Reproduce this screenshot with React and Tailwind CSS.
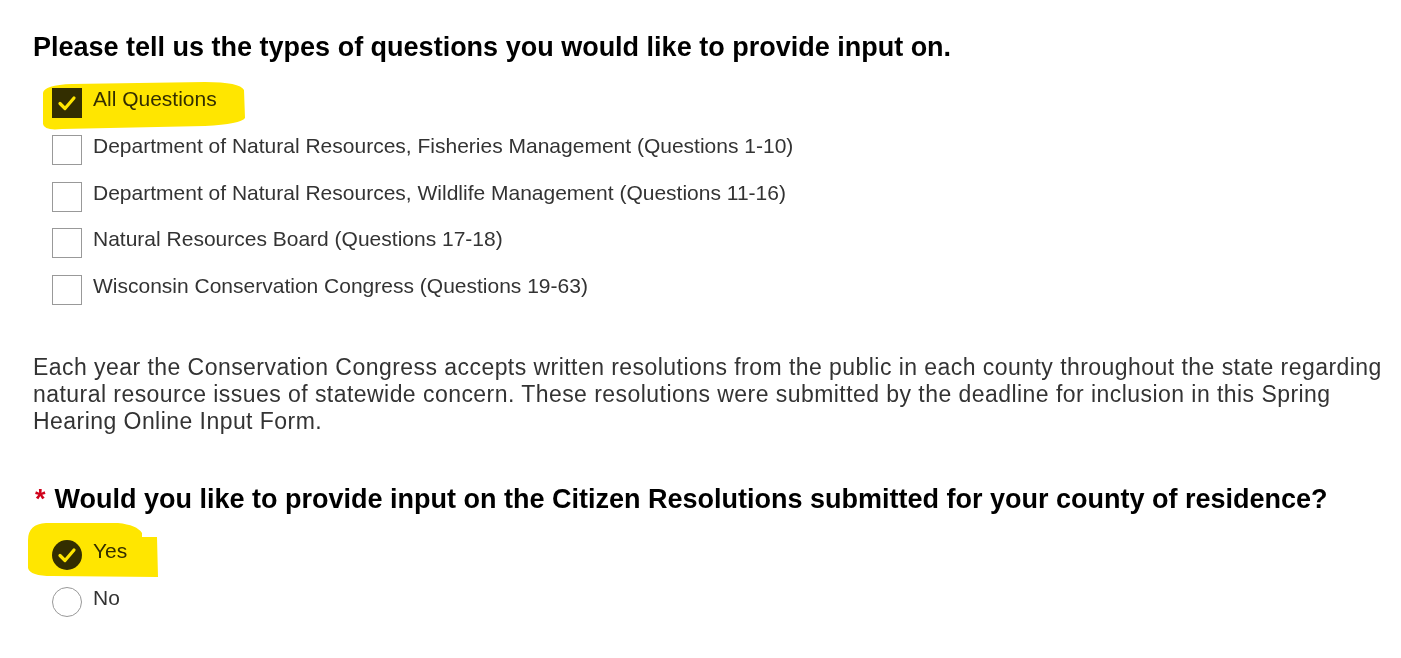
import React from "react";

const topics = [
  "All Questions",
  "Department of Natural Resources, Fisheries Management (Questions 1-10)",
  "Department of Natural Resources, Wildlife Management (Questions 11-16)",
  "Natural Resources Board (Questions 17-18)",
  "Wisconsin Conservation Congress (Questions 19-63)",
];

const Check = () => (
  <svg viewBox="0 0 30 30" className="w-[30px] h-[30px]">
    <path d="M8 15.5 L13 20.5 L22 10" fill="none" stroke="#fff" strokeWidth="3.2" strokeLinecap="round" strokeLinejoin="round" />
  </svg>
);

const Box = ({ checked }) =>
  checked ? (
    <span className="w-[30px] h-[30px] shrink-0 bg-[#333] flex items-center justify-center">
      <Check />
    </span>
  ) : (
    <span className="w-[30px] h-[30px] shrink-0 bg-white border border-[#999]" />
  );

const Radio = ({ checked }) =>
  checked ? (
    <span className="w-[30px] h-[30px] shrink-0 rounded-full bg-[#333] flex items-center justify-center">
      <Check />
    </span>
  ) : (
    <span className="w-[30px] h-[30px] shrink-0 rounded-full bg-white border border-[#999]" />
  );

const App = () => {
  return (
    <div className="relative w-[1401px] h-[658px] bg-white overflow-hidden font-['Liberation_Sans',Arial,sans-serif] text-[#333]">
      <div className="pl-[33px] pr-[10px] pt-[31px]">
        <h2 className="text-[27px] leading-[32px] font-bold text-black">
          Please tell us the types of questions you would like to provide input on.
        </h2>

        <div className="mt-[25px] pl-[19px] flex flex-col">
          {topics.map((t, i) => (
            <label key={i} className="h-[46.75px] flex items-start gap-[11px]">
              <Box checked={i === 0} />
              <span className="text-[21px] leading-[24px] -mt-[1px]">{t}</span>
            </label>
          ))}
        </div>

        <p className="mt-[32px] text-[23px] leading-[27px] tracking-[0.45px]">
          Each year the Conservation Congress accepts written resolutions from the public in each county throughout the state regarding natural resource issues of statewide concern. These resolutions were submitted by the deadline for inclusion in this Spring Hearing Online Input Form.
        </p>

        <h2 className="mt-[48px] text-[27px] leading-[32px] font-bold text-black flex gap-[9px]">
          <span className="text-[#d0021b] ml-[2px]">*</span>
          <span>Would you like to provide input on the Citizen Resolutions submitted for your county of residence?</span>
        </h2>

        <div className="mt-[25px] pl-[19px] flex flex-col">
          {["Yes", "No"].map((t, i) => (
            <label key={t} className="h-[47px] flex items-start gap-[11px]">
              <Radio checked={i === 0} />
              <span className="text-[21px] leading-[24px] -mt-[1px]">{t}</span>
            </label>
          ))}
        </div>
      </div>

      {/* marker highlights drawn over the answers */}
      <svg className="absolute inset-0 w-full h-full pointer-events-none mix-blend-multiply" viewBox="0 0 1401 658">
        <path d="M43,93 Q44,85 72,84 L205,82 Q240,82 244,90 L245,118 Q241,124 205,126 L62,129 Q44,131 43,124 Z" fill="#ffe600" />
        <path d="M28,540 Q28,524 46,523 L118,523 Q137,525 142,533 L142,537 L157,537 L158,577 L52,576 Q30,576 28,568 Z" fill="#ffe600" />
      </svg>
    </div>
  );
};

export default App;
